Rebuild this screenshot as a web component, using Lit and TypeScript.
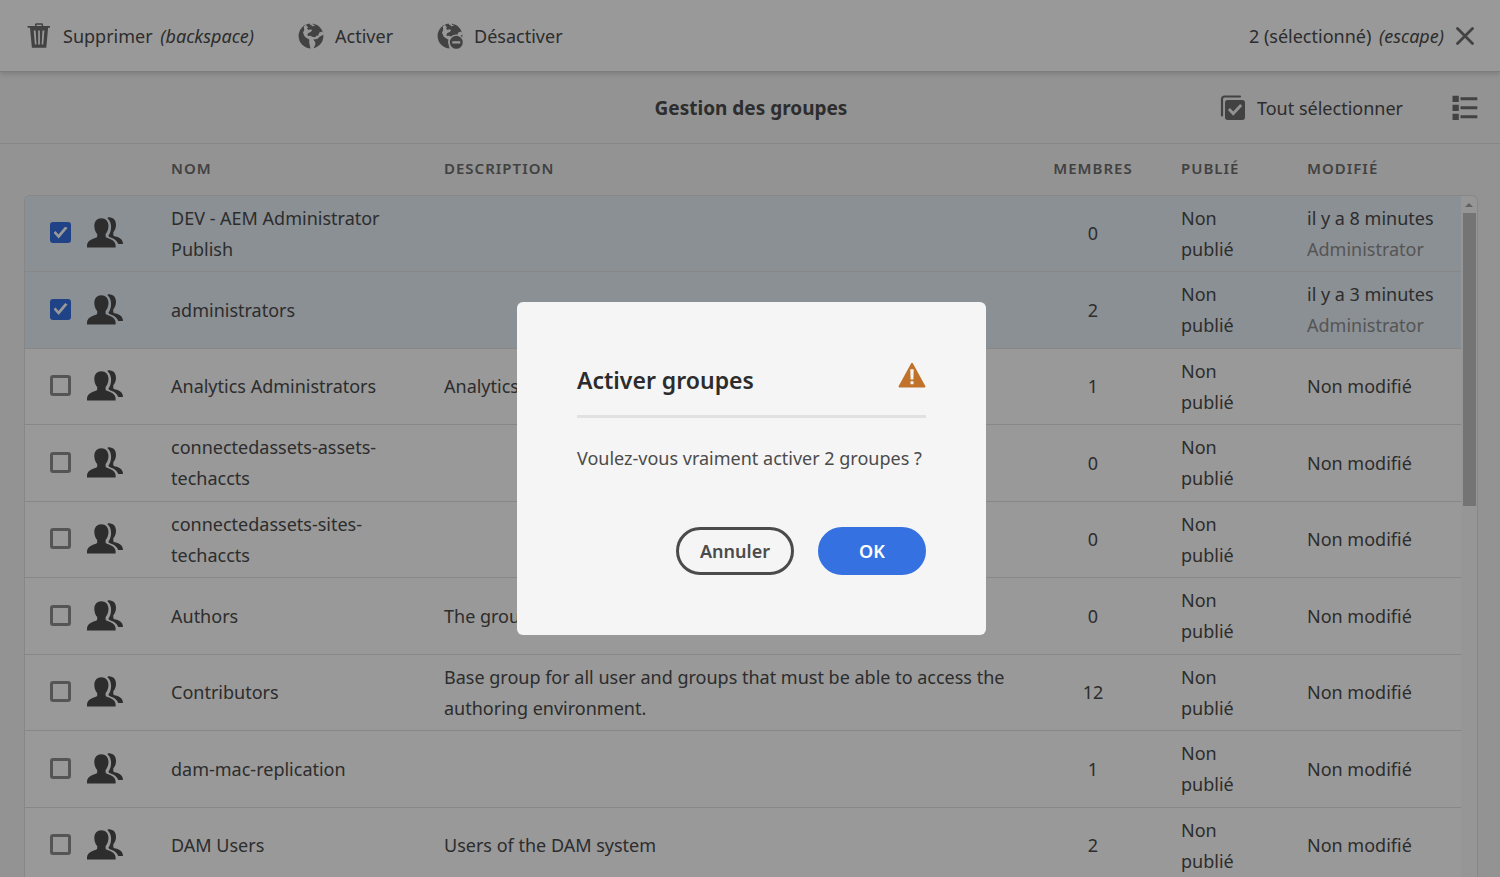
import { LitElement, html, css, svg, nothing } from "lit";
import { customElement, property, state } from "lit/decorators.js";

interface Group {
  name: string;
  description: string;
  members: number;
  modified: string;
  author?: string;
}

const GROUPS: Group[] = [
  { name: "DEV - AEM Administrator Publish", description: "", members: 0, modified: "il y a 8 minutes", author: "Administrator" },
  { name: "administrators", description: "", members: 2, modified: "il y a 3 minutes", author: "Administrator" },
  { name: "Analytics Administrators", description: "Analytics", members: 1, modified: "Non modifié" },
  { name: "connectedassets-assets-techaccts", description: "", members: 0, modified: "Non modifié" },
  { name: "connectedassets-sites-techaccts", description: "", members: 0, modified: "Non modifié" },
  { name: "Authors", description: "The group", members: 0, modified: "Non modifié" },
  {
    name: "Contributors",
    description: "Base group for all user and groups that must be able to access the authoring environment.",
    members: 12,
    modified: "Non modifié",
  },
  { name: "dam-mac-replication", description: "", members: 1, modified: "Non modifié" },
  { name: "DAM Users", description: "Users of the DAM system", members: 2, modified: "Non modifié" },
];

const oceans = svg`
  <path fill="#000" d="M5.800 3.200 6.200 7 5 9.800l1.800 4 4.600 2.900-.3 2.600 1.500 6.700h2.600l2.200-4.700-.3-2.400-1.800-2.500 3.900-.5 2.600-2.300 4.200-2.200-1.800-3-2.900 1.100-1.200 3.300-1.500-.2-1.200 1.700-2.600-.2-2.500-1.300-2.700.2.100-2.400 3.200-1.900 1.200-1.500-1.400-1-2.300.8L9 5.200l1.200-1.100-1.400-.8-.6-1.600z"/>
  <path fill="#000" d="m11.800 0 .3 2 1.300-.2.400 1.500 2.500-.3.500-1.400-1.800.3L14.600 0z"/>`;

const ICONS = {
  trash: svg`<svg viewBox="0 0 24 26"><path fill-rule="evenodd" d="M8 3V1.800C8 .8 8.700.3 9.600.3h5c.9 0 1.500.6 1.500 1.500V3h6.900v1.800h-1.900l-1.800 20H4.900L3 4.800H.6V3zm1.500 0h5.100V1.700H9.500zM6.700 7.500l1.200 14h1.600L8.600 7.500zm4.500 0v14h1.700v-14zm4.300 0-.9 14h1.600l1.200-14z"/></svg>`,
  globe: svg`<svg viewBox="0 0 26 26"><mask id="land"><path fill="#fff" d="M0 0h26v26H0z"/>${oceans}</mask><circle cx="13" cy="13" r="12.400" mask="url(#land)"/></svg>`,
  globeMinus: svg`<svg viewBox="0 0 26 26"><mask id="land"><path fill="#fff" d="M0 0h26v26H0z"/>${oceans}<circle cx="19.300" cy="19.300" r="7.800" fill="#000"/></mask><circle cx="13" cy="13" r="12.400" mask="url(#land)"/><path fill-rule="evenodd" d="M19.300 12.800a6.500 6.500 0 1 0 0 13 6.500 6.500 0 0 0 0-13zm-4 5.400h8v2.200h-8z"/></svg>`,
  close: svg`<svg viewBox="0 0 18 18"><path d="m1.500 1.500 15 15m0-15-15 15" fill="none" stroke="currentColor" stroke-width="2.800" stroke-linecap="round"/></svg>`,
  selectAll: svg`<svg viewBox="0 0 26 26"><path d="M2 20.500V4A2.500 2.500 0 0 1 4.500 1.500h15.500" fill="none" stroke="currentColor" stroke-width="2.200" stroke-linecap="round"/><path fill-rule="evenodd" d="M7.700 5h14.600A2.700 2.700 0 0 1 25 7.700v14.600a2.700 2.700 0 0 1-2.700 2.700H7.700A2.700 2.700 0 0 1 5 22.300V7.700A2.700 2.700 0 0 1 7.700 5zm.2 9.900 5.300 5.900 9-9.700-2.100-2-6.900 7.400-3.200-3.600z"/></svg>`,
  list: svg`<svg viewBox="0 0 26 26"><path d="M.5.700h6.300v6.200H.5zm0 9h6.300v6.200H.5zm0 9h6.300v6.200H.5zM8.500 2.200h16.800v3H8.500zm0 9h16.800v3H8.500zm0 9h16.800v3H8.500z"/></svg>`,
  people: svg`<svg viewBox="0 0 36 31"><path d="M14.300 1.200c-4.200 0-7 3-7 7.600 0 3.500 1.200 6.400 2.900 8.200v2.500c0 1.100-1.900 1.400-4.700 2.400C1.900 23.200 0 25.500 0 28.500V30.500h28.600v-2c0-2.900-1.900-5.300-5.400-6.600-2.700-1-4.600-1.300-4.600-2.400V17c1.600-1.800 2.900-4.700 2.900-8.200 0-4.600-2.900-7.600-7.200-7.600z"/><path d="M20.300.9c1-.5 1.900-.6 2.800-.5 3.800.300 5.900 3.200 5.900 7.400 0 3.200-1.100 5.900-2.700 7.500v2.600c0 1.100 1.700 1.200 4.300 2.200 3.600 1.400 5.400 3.800 5.400 6.900h-4.800c-1-2.800-3.100-4.700-6.300-6-2-.8-3.100-1.200-3.500-2.200 1.700-2.400 2.700-5.600 2.700-9 0-3.900-1.400-7-3.800-8.900z"/></svg>`,
  alert: svg`<svg viewBox="0 0 28 26"><path fill-rule="evenodd" d="M14 .8c.4 0 .6.2.8.5l12.500 22.800c.4.700 0 1.400-.8 1.400h-25c-.8 0-1.200-.7-.8-1.400L13.200 1.300c.2-.3.4-.5.8-.5zm-1.700 6.500.3 10.200h2.800l.3-10.200zm.2 12v3h3v-3z"/></svg>`,
  arrowUp: svg`<svg viewBox="0 0 8 4"><path d="M4 0 8 4H0z"/></svg>`,
};

@customElement("ui-icon")
class UiIcon extends LitElement {
  static styles = css`
    :host { display: inline-flex; flex: none; }
    svg { width: 100%; height: 100%; fill: currentColor; }
  `;
  @property() name: keyof typeof ICONS = "trash";
  render() {
    return ICONS[this.name] ?? nothing;
  }
}

@customElement("group-table")
class GroupTable extends LitElement {
  @state() private selected = new Set([0, 1]);

  static styles = css`
    :host { display: flex; flex: 1; min-height: 0; padding: 0 22px 0 24px; overflow: hidden; }
    table { flex: 1; display: block; min-width: 0; }
    thead, tbody { display: block; border-left: 1px solid #e1e1e1; }
    thead { border-color: transparent; }
    tbody { border-top: 1px solid #e1e1e1; border-top-left-radius: 6px; overflow: hidden; }
    tr { display: grid; grid-template-columns: 62px 84px 273px 1fr 112px 126px 186px; align-items: center; }
    thead tr { box-sizing: border-box; height: 51px; padding-bottom: 2px; }
    tbody tr { box-sizing: border-box; height: 76px; border-bottom: 1px solid #e1e1e1; background: #fff; }
    tbody tr:nth-child(even) { height: 77px; }
    tbody tr.selected { background: #e8f0f8; }
    th, td { padding: 0; text-align: left; line-height: 31px; }
    th { font-size: 15px; font-weight: 600; letter-spacing: 1px; color: #6e6e6e; }
    td.check, td.avatar { display: flex; padding-bottom: 2px; }
    td.check { padding-left: 25px; }
    .avatar ui-icon { width: 36px; height: 31px; }
    .name { padding-right: 40px; }
    .count { text-align: center; }
    .state, .modified { padding-left: 32px; }
    td.state { padding-right: 32px; }
    .author { display: block; color: #8e8e8e; }
    input {
      appearance: none; box-sizing: border-box; width: 21px; height: 21px; margin: 0;
      border: 3px solid #8e8e8e; border-radius: 3px; display: grid; place-content: center;
    }
    input:checked { border-color: #3571e0; background: #3571e0; }
    input:checked::before {
      content: ""; width: 14px; height: 12px; background: #fff;
      clip-path: polygon(0 52%, 15% 38%, 35% 66%, 84% 0, 100% 13%, 37% 100%);
    }
    .scrollbar {
      width: 16px; margin-top: 51px; padding-top: 7px; border: 1px solid #e1e1e1; border-width: 1px 1px 0 0;
      border-top-right-radius: 6px; background: #fafafa; display: flex; flex-direction: column; align-items: center; gap: 6px;
    }
    .scrollbar ui-icon { width: 8px; height: 4px; color: #a3a3a3; }
    .thumb { width: 13px; height: 43.5%; background: #c1c1c1; }
  `;

  private toggle(i: number) {
    const next = new Set(this.selected);
    next.has(i) ? next.delete(i) : next.add(i);
    this.selected = next;
  }

  render() {
    return html`
      <table>
        <thead>
          <tr>
            <th></th><th></th>
            <th>NOM</th>
            <th>DESCRIPTION</th>
            <th class="count">MEMBRES</th>
            <th class="state">PUBLIÉ</th>
            <th class="modified">MODIFIÉ</th>
          </tr>
        </thead>
        <tbody>
          ${GROUPS.map((g, i) => html`
            <tr class=${this.selected.has(i) ? "selected" : ""}>
              <td class="check">
                <input type="checkbox" aria-label=${g.name} .checked=${this.selected.has(i)} @change=${() => this.toggle(i)}>
              </td>
              <td class="avatar"><ui-icon name="people"></ui-icon></td>
              <td class="name">${g.name}</td>
              <td>${g.description}</td>
              <td class="count">${g.members}</td>
              <td class="state">Non publié</td>
              <td class="modified">${g.modified}${g.author ? html`<span class="author">${g.author}</span>` : nothing}</td>
            </tr>`)}
        </tbody>
      </table>
      <div class="scrollbar"><ui-icon name="arrowUp"></ui-icon><div class="thumb"></div></div>
    `;
  }
}

@customElement("app-root")
class AppRoot extends LitElement {
  static styles = css`
    :host {
      display: flex; flex-direction: column; height: 100vh; overflow: hidden; background: #f5f5f5;
      font-family: "Noto Sans", "Open Sans", sans-serif; font-size: 18px; line-height: 24px; color: #4b4b4b;
    }
    button { font: inherit; color: inherit; background: none; border: 0; margin: 0; padding: 0; display: inline-flex; align-items: center; }
    ui-icon { color: #6e6e6e; width: 26px; height: 26px; }
    .actions {
      flex: none; display: flex; gap: 44px; padding: 0 26px; height: 71px; background: #fff;
      border-bottom: 1px solid #d0d0d0; box-shadow: 0 1px 6px rgba(0, 0, 0, 0.2); z-index: 1;
    }
    .actions button { gap: 11px; }
    .actions .deselect { margin-left: auto; gap: 12px; }
    .deselect ui-icon { width: 18px; height: 18px; }
    em { margin-left: 3px; }
    .titlebar {
      flex: none; display: grid; grid-template-columns: 1fr auto 1fr; align-items: center;
      height: 71px; padding: 0 22px 0 24px; border-bottom: 1px solid #e1e1e1;
    }
    h1 { grid-column: 2; margin: 0; font-size: 19px; font-weight: 700; }
    .tools { justify-self: end; display: flex; gap: 49px; }
    .tools button { gap: 11px; }
    .overlay {
      position: absolute; inset: 0; z-index: 2; box-sizing: border-box; padding: 60px 0 0 3px;
      display: flex; align-items: center; justify-content: center; background: rgba(0, 0, 0, 0.4);
    }
    .dialog { box-sizing: border-box; width: 469px; padding: 60px; border-radius: 6px; background: #f5f5f5; }
    .dialog header {
      display: flex; justify-content: space-between; height: 53px; border-bottom: 3px solid #e1e1e1;
    }
    h2 { margin: 0; font-size: 23px; line-height: 36px; font-weight: 600; color: #2c2c2c; }
    .dialog header ui-icon { width: 28px; height: 26px; color: #c0722a; }
    .dialog p { margin: 28px 0 57px; }
    .buttons { display: flex; justify-content: flex-end; gap: 24px; }
    .buttons button {
      box-sizing: border-box; height: 48px; min-width: 108px; padding: 0 21px; justify-content: center;
      border: 3px solid #4b4b4b; border-radius: 24px; font-weight: 600;
    }
    .buttons .primary { border-color: #3571e0; background: #3571e0; color: #fff; }
  `;

  render() {
    return html`
      <div class="actions">
        <button><ui-icon name="trash"></ui-icon><span>Supprimer <em>(backspace)</em></span></button>
        <button><ui-icon name="globe"></ui-icon>Activer</button>
        <button><ui-icon name="globeMinus"></ui-icon>Désactiver</button>
        <button class="deselect"><span>2 (sélectionné) <em>(escape)</em></span><ui-icon name="close"></ui-icon></button>
      </div>
      <div class="titlebar">
        <h1>Gestion des groupes</h1>
        <div class="tools">
          <button><ui-icon name="selectAll"></ui-icon>Tout sélectionner</button>
          <button aria-label="Vue Liste"><ui-icon name="list"></ui-icon></button>
        </div>
      </div>
      <group-table></group-table>
      <div class="overlay">
        <section class="dialog" role="dialog" aria-modal="true" aria-labelledby="title">
          <header><h2 id="title">Activer groupes</h2><ui-icon name="alert"></ui-icon></header>
          <p>Voulez-vous vraiment activer 2 groupes ?</p>
          <div class="buttons"><button>Annuler</button><button class="primary">OK</button></div>
        </section>
      </div>
    `;
  }
}
